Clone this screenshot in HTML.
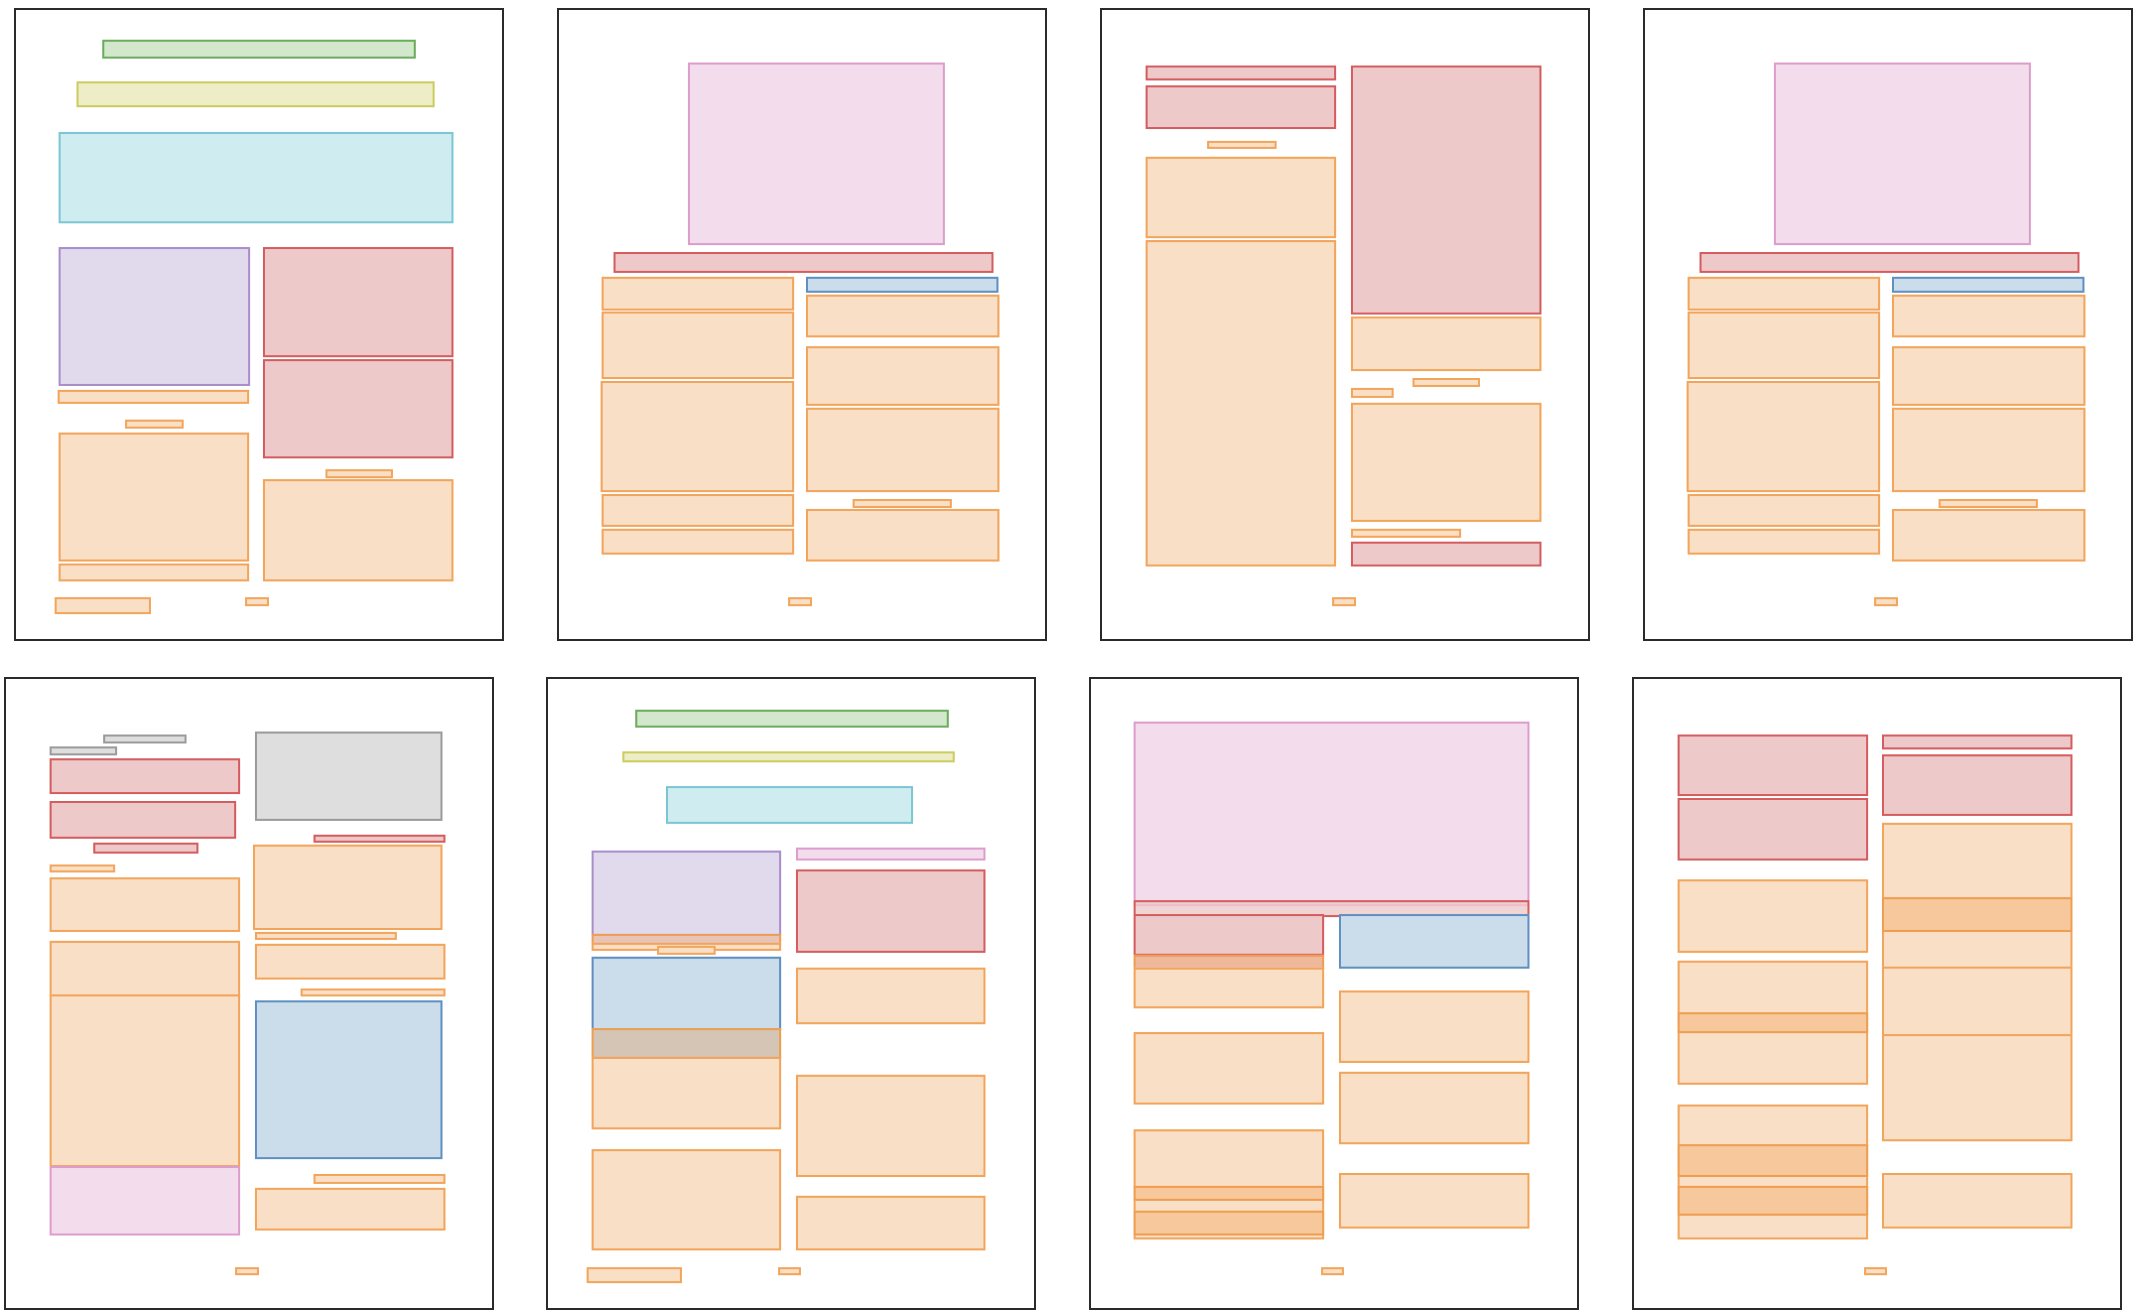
<!DOCTYPE html>
<html><head><meta charset="utf-8"><style>
body{margin:0;width:2140px;height:1316px;background:#fff;position:relative;overflow:hidden;font-family:"Liberation Sans",sans-serif}
.p{position:absolute;width:490px;height:633px;border:2px solid #2a2a2a;box-sizing:border-box;background:#fff;overflow:hidden}
.w{position:absolute;left:-2px;top:-2px;width:494px;height:638px;transform:scale(0.992);transform-origin:0 0;border:0!important}
.w div{position:absolute;box-sizing:border-box;border:2px solid}
.o{background:#f9dfc5;border-color:#f1a45a!important}
.od{background:#f6c89c;border-color:#ef9d50!important}
.r{background:#edc9c9;border-color:#d45b5e!important}
.g{background:#d2e7cb;border-color:#6aab5c!important}
.y{background:#ededc8;border-color:#cbcb5e!important}
.c{background:#cfecf1;border-color:#7ac6d3!important}
.u{background:#e1d9ec;border-color:#a98ccb!important}
.k{background:#f3dded;border-color:#dc9ccc!important}
.b{background:#cbdcea;border-color:#5d8fc0!important}
.e{background:#dedede;border-color:#9a9a9a!important}
.t{background:#d4c5b4;border-color:#ef9d50!important}
</style></head><body>

<!-- Page 1 -->
<div class="p" style="left:14px;top:8px"><div class="w">
<div class="g" style="left:89px;top:32px;width:316px;height:19px"></div>
<div class="y" style="left:63px;top:74px;width:361px;height:26px"></div>
<div class="c" style="left:45px;top:125px;width:398px;height:92px"></div>
<div class="u" style="left:45px;top:241px;width:193px;height:140px"></div>
<div class="r" style="left:251px;top:241px;width:192px;height:111px"></div>
<div class="r" style="left:251px;top:354px;width:192px;height:100px"></div>
<div class="o" style="left:44px;top:385px;width:193px;height:14px"></div>
<div class="o" style="left:112px;top:415px;width:59px;height:9px"></div>
<div class="o" style="left:45px;top:428px;width:192px;height:130px"></div>
<div class="o" style="left:45px;top:560px;width:192px;height:18px"></div>
<div class="o" style="left:314px;top:465px;width:68px;height:9px"></div>
<div class="o" style="left:251px;top:475px;width:192px;height:103px"></div>
<div class="o" style="left:41px;top:594px;width:97px;height:17px"></div>
<div class="o" style="left:233px;top:594px;width:24px;height:9px"></div>
</div></div>

<!-- Page 2 -->
<div class="p" style="left:557px;top:8px"><div class="w">
<div class="k" style="left:132px;top:55px;width:259px;height:184px"></div>
<div class="r" style="left:57px;top:246px;width:383px;height:21px"></div>
<div class="o" style="left:45px;top:271px;width:194px;height:34px"></div>
<div class="o" style="left:45px;top:306px;width:194px;height:68px"></div>
<div class="o" style="left:44px;top:376px;width:195px;height:112px"></div>
<div class="o" style="left:45px;top:490px;width:194px;height:33px"></div>
<div class="o" style="left:45px;top:525px;width:194px;height:26px"></div>
<div class="b" style="left:251px;top:271px;width:194px;height:16px"></div>
<div class="o" style="left:251px;top:289px;width:195px;height:43px"></div>
<div class="o" style="left:251px;top:341px;width:195px;height:60px"></div>
<div class="o" style="left:251px;top:403px;width:195px;height:85px"></div>
<div class="o" style="left:298px;top:495px;width:100px;height:9px"></div>
<div class="o" style="left:251px;top:505px;width:195px;height:53px"></div>
<div class="o" style="left:233px;top:594px;width:24px;height:9px"></div>
</div></div>

<!-- Page 3 -->
<div class="p" style="left:1100px;top:8px"><div class="w">
<div class="r" style="left:46px;top:58px;width:192px;height:15px"></div>
<div class="r" style="left:46px;top:78px;width:192px;height:44px"></div>
<div class="o" style="left:108px;top:134px;width:70px;height:8px"></div>
<div class="o" style="left:46px;top:150px;width:192px;height:82px"></div>
<div class="o" style="left:46px;top:234px;width:192px;height:329px"></div>
<div class="r" style="left:253px;top:58px;width:192px;height:251px"></div>
<div class="o" style="left:253px;top:311px;width:192px;height:55px"></div>
<div class="o" style="left:315px;top:373px;width:68px;height:9px"></div>
<div class="o" style="left:253px;top:383px;width:43px;height:10px"></div>
<div class="o" style="left:253px;top:398px;width:192px;height:120px"></div>
<div class="o" style="left:253px;top:525px;width:111px;height:9px"></div>
<div class="r" style="left:253px;top:538px;width:192px;height:25px"></div>
<div class="o" style="left:234px;top:594px;width:24px;height:9px"></div>
</div></div>

<!-- Page 4 -->
<div class="p" style="left:1643px;top:8px"><div class="w">
<div class="k" style="left:132px;top:55px;width:259px;height:184px"></div>
<div class="r" style="left:57px;top:246px;width:383px;height:21px"></div>
<div class="o" style="left:45px;top:271px;width:194px;height:34px"></div>
<div class="o" style="left:45px;top:306px;width:194px;height:68px"></div>
<div class="o" style="left:44px;top:376px;width:195px;height:112px"></div>
<div class="o" style="left:45px;top:490px;width:194px;height:33px"></div>
<div class="o" style="left:45px;top:525px;width:194px;height:26px"></div>
<div class="b" style="left:251px;top:271px;width:194px;height:16px"></div>
<div class="o" style="left:251px;top:289px;width:195px;height:43px"></div>
<div class="o" style="left:251px;top:341px;width:195px;height:60px"></div>
<div class="o" style="left:251px;top:403px;width:195px;height:85px"></div>
<div class="o" style="left:298px;top:495px;width:100px;height:9px"></div>
<div class="o" style="left:251px;top:505px;width:195px;height:53px"></div>
<div class="o" style="left:233px;top:594px;width:24px;height:9px"></div>
</div></div>

<!-- Page 5 -->
<div class="p" style="left:4px;top:677px"><div class="w">
<div class="e" style="left:100px;top:58px;width:84px;height:9px"></div>
<div class="e" style="left:46px;top:70px;width:68px;height:9px"></div>
<div class="r" style="left:46px;top:82px;width:192px;height:36px"></div>
<div class="r" style="left:46px;top:125px;width:188px;height:38px"></div>
<div class="r" style="left:90px;top:167px;width:106px;height:11px"></div>
<div class="o" style="left:46px;top:189px;width:66px;height:8px"></div>
<div class="o" style="left:46px;top:202px;width:192px;height:55px"></div>
<div class="o" style="left:46px;top:266px;width:192px;height:56px"></div>
<div class="o" style="left:46px;top:320px;width:192px;height:174px"></div>
<div class="k" style="left:46px;top:493px;width:192px;height:70px"></div>
<div class="e" style="left:253px;top:55px;width:189px;height:90px"></div>
<div class="r" style="left:312px;top:159px;width:133px;height:8px"></div>
<div class="o" style="left:251px;top:169px;width:191px;height:86px"></div>
<div class="o" style="left:253px;top:257px;width:143px;height:8px"></div>
<div class="o" style="left:253px;top:269px;width:192px;height:36px"></div>
<div class="o" style="left:299px;top:314px;width:146px;height:8px"></div>
<div class="b" style="left:253px;top:326px;width:189px;height:160px"></div>
<div class="o" style="left:312px;top:501px;width:133px;height:10px"></div>
<div class="o" style="left:253px;top:515px;width:192px;height:43px"></div>
<div class="o" style="left:233px;top:595px;width:24px;height:8px"></div>
</div></div>

<!-- Page 6 -->
<div class="p" style="left:546px;top:677px"><div class="w">
<div class="g" style="left:90px;top:33px;width:316px;height:18px"></div>
<div class="y" style="left:77px;top:75px;width:335px;height:11px"></div>
<div class="c" style="left:121px;top:110px;width:249px;height:38px"></div>
<div class="u" style="left:46px;top:175px;width:191px;height:86px"></div>
<div style="left:46px;top:259px;width:191px;height:11px;background:#e7c3b8;border-color:#ef9d50"></div>
<div class="o" style="left:46px;top:268px;width:191px;height:8px"></div>
<div class="o" style="left:112px;top:271px;width:59px;height:9px"></div>
<div class="b" style="left:46px;top:282px;width:191px;height:74px"></div>
<div class="t" style="left:46px;top:354px;width:191px;height:31px;border-bottom-color:#8a8a8a!important"></div>
<div class="o" style="left:46px;top:383px;width:191px;height:73px"></div>
<div class="o" style="left:46px;top:476px;width:191px;height:102px"></div>
<div class="k" style="left:252px;top:172px;width:191px;height:13px"></div>
<div class="r" style="left:252px;top:194px;width:191px;height:84px"></div>
<div class="o" style="left:252px;top:293px;width:191px;height:57px"></div>
<div class="o" style="left:252px;top:401px;width:191px;height:103px"></div>
<div class="o" style="left:252px;top:523px;width:191px;height:55px"></div>
<div class="o" style="left:41px;top:595px;width:96px;height:16px"></div>
<div class="o" style="left:234px;top:595px;width:23px;height:8px"></div>
</div></div>

<!-- Page 7 -->
<div class="p" style="left:1089px;top:677px"><div class="w">
<div class="k" style="left:45px;top:45px;width:399px;height:186px"></div>
<div class="r" style="left:45px;top:225px;width:399px;height:17px;background:rgba(237,201,201,.8)"></div>
<div class="r" style="left:45px;top:239px;width:192px;height:42px"></div>
<div style="left:45px;top:280px;width:192px;height:15px;background:#efb89b;border-color:#ef9d50"></div>
<div class="o" style="left:45px;top:293px;width:192px;height:41px"></div>
<div class="b" style="left:252px;top:239px;width:192px;height:55px"></div>
<div class="o" style="left:45px;top:358px;width:192px;height:73px"></div>
<div class="o" style="left:45px;top:456px;width:192px;height:111px"></div>
<div class="od" style="left:45px;top:513px;width:192px;height:15px"></div>
<div class="od" style="left:45px;top:538px;width:192px;height:25px"></div>
<div class="o" style="left:252px;top:316px;width:192px;height:73px"></div>
<div class="o" style="left:252px;top:398px;width:192px;height:73px"></div>
<div class="o" style="left:252px;top:500px;width:192px;height:56px"></div>
<div class="o" style="left:234px;top:595px;width:23px;height:8px"></div>
</div></div>

<!-- Page 8 -->
<div class="p" style="left:1632px;top:677px"><div class="w">
<div class="r" style="left:46px;top:58px;width:192px;height:62px"></div>
<div class="r" style="left:46px;top:122px;width:192px;height:63px"></div>
<div class="o" style="left:46px;top:204px;width:192px;height:74px"></div>
<div class="o" style="left:46px;top:286px;width:192px;height:125px"></div>
<div class="od" style="left:46px;top:338px;width:192px;height:21px"></div>
<div class="o" style="left:46px;top:431px;width:192px;height:136px"></div>
<div class="od" style="left:46px;top:471px;width:192px;height:33px"></div>
<div class="od" style="left:46px;top:513px;width:192px;height:30px"></div>
<div class="r" style="left:252px;top:58px;width:192px;height:15px"></div>
<div class="r" style="left:252px;top:78px;width:192px;height:62px"></div>
<div class="o" style="left:252px;top:147px;width:192px;height:147px"></div>
<div class="od" style="left:252px;top:222px;width:192px;height:35px"></div>
<div class="o" style="left:252px;top:292px;width:192px;height:70px"></div>
<div class="o" style="left:252px;top:360px;width:192px;height:108px"></div>
<div class="o" style="left:252px;top:500px;width:192px;height:56px"></div>
<div class="o" style="left:234px;top:595px;width:23px;height:8px"></div>
</div></div>

</body></html>
